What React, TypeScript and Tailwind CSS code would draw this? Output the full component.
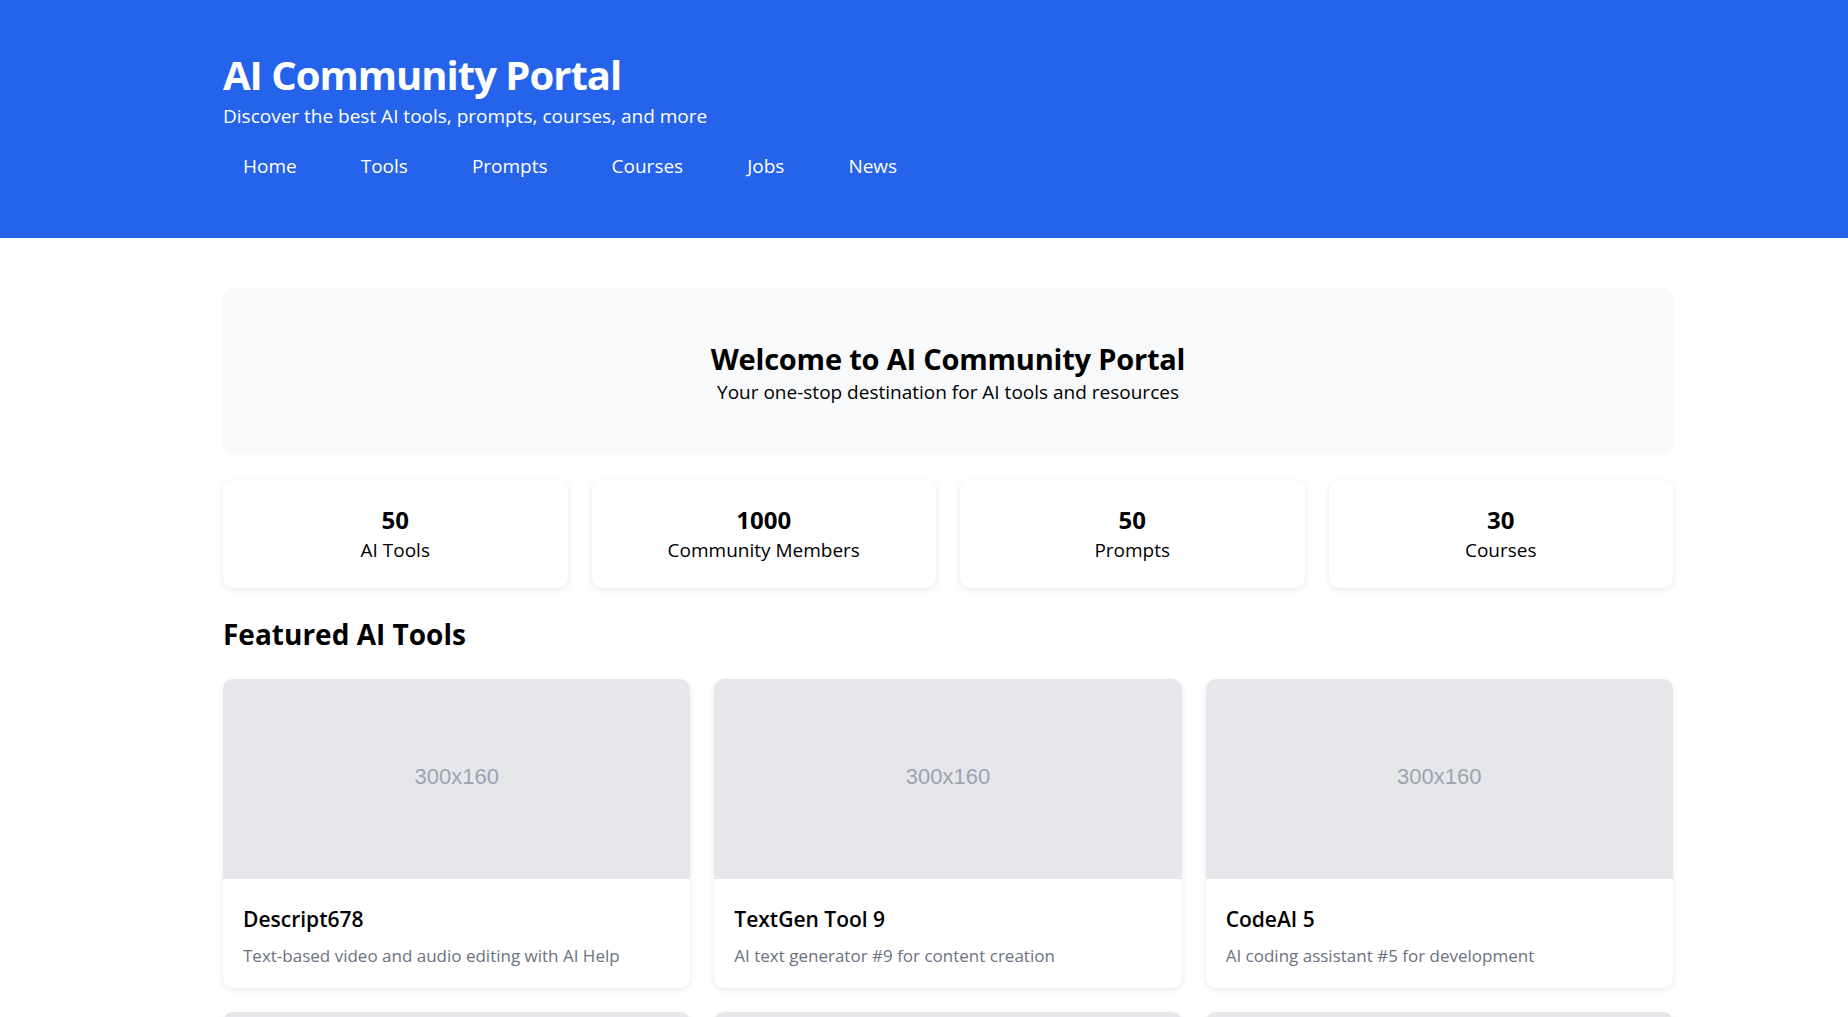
import React from "react";

const navLinks = ["Home", "Tools", "Prompts", "Courses", "Jobs", "News"];

const stats = [
  { value: "50", label: "AI Tools" },
  { value: "1000", label: "Community Members" },
  { value: "50", label: "Prompts" },
  { value: "30", label: "Courses" },
];

const tools = [
  { name: "Descript678", description: "Text-based video and audio editing with AI Help" },
  { name: "TextGen Tool 9", description: "AI text generator #9 for content creation" },
  { name: "CodeAI 5", description: "AI coding assistant #5 for development" },
  { name: "ImageGen 3", description: "AI image generator #3 for creative work" },
  { name: "ChatBot Pro 7", description: "Conversational AI assistant #7 for support" },
  { name: "VoiceAI 2", description: "AI voice synthesis #2 for narration" },
];

const font = "[font-family:'Open_Sans','Noto_Sans',sans-serif]";

export default function App() {
  return (
    <div className={`min-h-screen bg-white text-black ${font}`}>
      <header className="h-[238px] bg-[#2563eb] text-white">
        <div className="ml-[223px] w-[1450px] pt-[51px]">
          <h1 className="text-[40px] leading-[48px] font-bold tracking-[-1px]">AI Community Portal</h1>
          <p className="mt-[4px] text-[19px] leading-[27px]">
            Discover the best AI tools, prompts, courses, and more
          </p>
          <nav className="mt-[15px] flex gap-6">
            {navLinks.map((link) => (
              <a key={link} href="#" className="px-5 py-2 text-[19px] leading-[27px] text-white">
                {link}
              </a>
            ))}
          </nav>
        </div>
      </header>

      <main className="ml-[223px] w-[1450px] pt-[50px] pb-10">
        <section className="rounded-[10px] bg-[#f8f9fa] pt-[53px] pb-[49px] text-center">
          <h2 className="text-[29px] leading-[36px] font-bold tracking-[-0.2px]">Welcome to AI Community Portal</h2>
          <p className="mt-[2px] text-[19px] leading-[27px]">
            Your one-stop destination for AI tools and resources
          </p>
        </section>

        <section className="mt-[25px] grid grid-cols-4 gap-6">
          {stats.map((stat, index) => (
            <div
              key={`stat-${index}`}
              className="rounded-[10px] bg-white p-6 text-center shadow-[0_2px_6px_rgba(0,0,0,0.09)]"
            >
              <div className="text-[24px] leading-[32px] font-bold">{stat.value}</div>
              <div className="text-[19px] leading-[28px]">{stat.label}</div>
            </div>
          ))}
        </section>

        <h2 className="mt-[29px] mb-[28px] text-[28px] leading-[34px] font-bold">Featured AI Tools</h2>

        <section className="grid grid-cols-3 gap-6">
          {tools.map((tool, index) => (
            <div
              key={`tool-${index}`}
              className="overflow-hidden rounded-[10px] bg-white shadow-[0_2px_6px_rgba(0,0,0,0.09)]"
            >
              <div className="flex h-[200px] items-center justify-center bg-[#e5e7eb] pb-[6px] [font-family:'Liberation_Sans',Arial,sans-serif] text-[22px] text-[#9ca3af]">
                300x160
              </div>
              <div className="px-5 pt-[26px] pb-5">
                <h3 className="text-[21px] leading-[28px] font-semibold">{tool.name}</h3>
                <p className="mt-[11px] text-[17px] leading-[24px] text-[#6b7280]">{tool.description}</p>
              </div>
            </div>
          ))}
        </section>
      </main>
    </div>
  );
}
